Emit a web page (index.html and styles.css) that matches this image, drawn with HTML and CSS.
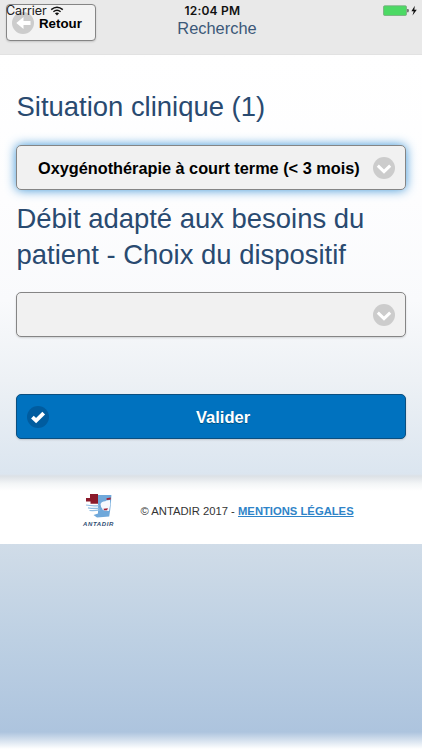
FILE: index.html
```
<!DOCTYPE html>
<html lang="fr">
<head>
<meta charset="utf-8">
<title>Recherche</title>
<link rel="stylesheet" href="styles.css">
</head>
<body>
<div class="status">
  <span class="carrier">Carrier</span>
  <svg class="wifi" width="14" height="10" viewBox="0 0 14 10"><path d="M1.2 3.6Q7-1.2 12.8 3.6M3.4 5.8Q7 2.7 10.6 5.8" fill="none" stroke="#111" stroke-width="1.5"/><path d="M4.9 7.3Q7 5.6 9.1 7.3L7 9.5Z" fill="#111"/></svg>
  <span class="clock">12:04 PM</span>
  <svg class="battery" width="36" height="12" viewBox="0 0 36 12"><rect x="1.5" y=".8" width="23" height="9.7" rx="1.2" fill="#4cd964" stroke="#78a97e" stroke-width=".8"/><path d="M25.4 4h.9q.7 1.6 0 3.2h-.9z" fill="#333"/><path d="M32.8.8L29.4 6.2h2.3l-1.2 4.3L34.8 4.8h-2.5z" fill="#111"/></svg>
</div>
<header class="header">
  <a class="back"><svg width="22" height="22" viewBox="0 0 22 22"><circle cx="11" cy="11" r="11" fill="#ccc"/><path d="M18.500 9h-7V5L4.300 11l7.200 6v-4h7z" fill="#fff"/></svg><span>Retour</span></a>
  <h1>Recherche</h1>
</header>
<main class="content">
  <h2 class="first">Situation clinique (1)</h2>
  <div class="select focus"><span>Oxygénothérapie à court terme (&lt; 3 mois)</span><svg width="22" height="22" viewBox="0 0 22 22"><circle cx="11" cy="11" r="11" fill="#ccc"/><path d="M4.8 8.7L11 14.7l6.200-6" fill="none" stroke="#fff" stroke-width="3"/></svg></div>
  <h2 class="second">Débit adapté aux besoins du<br>patient - Choix du dispositif</h2>
  <div class="select"><span></span><svg width="22" height="22" viewBox="0 0 22 22"><circle cx="11" cy="11" r="11" fill="#ccc"/><path d="M4.8 8.7L11 14.7l6.200-6" fill="none" stroke="#fff" stroke-width="3"/></svg></div>
  <div class="submit"><svg width="22" height="22" viewBox="0 0 22 22"><circle cx="11" cy="11" r="11" fill="#005c9f"/><path d="M5.4 11.1l3.7 3.6 7.6-7.6" fill="none" stroke="#fff" stroke-width="3.8"/></svg><span>Valider</span></div>
</main>
<footer class="footer">
  <div class="logo">
    <svg width="30" height="24" viewBox="0 0 30 24"><path d="M10 1H26.4L26 8l-.8 8-1 6.6L12 23.5 8.5 21l4.5-1.5V9z" fill="#6fa8da"/><path d="M15.500 10q1-2.500 3-2.500t3-1l3.500-.5.3 4-1.3 7-5-.5q-3.5-2-3.500-6.500z" fill="#f5f9fd"/><path d="M5 0h8v9.800H5.500V7.500H1V4h4z" fill="#8b1a2b"/><path d="M21.500 4.300l4.200-.8v2l-4 .5zM18.500 14.700l4.500-.5-1 2h-3z" fill="#a12234"/><path d="M1 11q5.500 1.200 13 .6M3 13.800q5 1 11.500.4M4.500 16.500q5 .4 10.500-.6" fill="none" stroke="#8fbde4" stroke-width="1.200"/></svg>
    <span>ANTADIR</span>
  </div>
  <p>© ANTADIR 2017 - <a>MENTIONS LÉGALES</a></p>
</footer>
</body>
</html>
```
FILE: styles.css
```
* { box-sizing: border-box; }
html { height: 100%; }
body {
  margin: 0;
  height: 750px;
  overflow: hidden;
  font-family: "Liberation Sans", Arial, sans-serif;
  background: linear-gradient(#fff 55px, #fdfdfe 200px, #f9fafc 300px, #edf1f5 380px, #dce6f0 470px, #d0dce8 545px, #bdd0e3 640px, #adc4de 732px, #fff 749px);
}
svg { display: block; flex: none; }
.status {
  position: absolute;
  z-index: 2;
  top: 0;
  left: 0;
  width: 422px;
  height: 22px;
  padding: 0 4px 0 6px;
  display: flex;
  align-items: center;
  color: #222;
}
.carrier { font: 12.6px/22px Inter, sans-serif; width: 41px; letter-spacing: -0.1px; white-space: nowrap; }
.wifi { margin-left: 3px; }
.clock { margin-left: 120.5px; width: 70px; font: 600 12px/22px Inter, sans-serif; letter-spacing: .2px; color: #111; white-space: nowrap; }
.battery { margin-left: auto; }
.header {
  position: relative;
  height: 55px;
  background: #e9e9e9;
  border-bottom: 1px solid #e2e2e2;
}
.header h1 {
  margin: 0;
  padding-top: 17px;
  padding-left: 12px;
  text-align: center;
  font-size: 16.4px;
  line-height: 22px;
  font-weight: 400;
  color: #3b5878;
}
.back {
  position: absolute;
  top: 4px;
  left: 6px;
  width: 90px;
  height: 37px;
  border: 1px solid #858585;
  border-radius: 4px;
  background: #f3f3f3;
  display: flex;
  align-items: center;
  padding-left: 5px;
  gap: 5px;
  font-size: 13.3px;
  font-weight: 700;
  box-shadow: 0 1px 2px rgba(0,0,0,.15);
}
.back span { padding-top: 2px; }
.content { padding: 0 16px; height: 419px; }
h2 { margin: 0; padding-left: .5px; color: #294a70; font-size: 27.45px; line-height: 36px; font-weight: 400; white-space: nowrap; }
.first { padding-top: 34px; margin-bottom: 20px; }
.second { margin: 11px 0 19px; }
.select, .submit {
  height: 45px;
  width: 390px;
  border: 1px solid #858585;
  border-radius: 5px;
  background: #f1f1f1;
  display: flex;
  align-items: center;
  padding: 0 10px 0 21px;
  font-size: 16.3px;
  font-weight: 700;
  white-space: nowrap;
  box-shadow: 0 1px 2px rgba(0,0,0,.15);
}
.select span { padding-top: 1px; }
.select svg { margin-left: auto; }
.focus { box-shadow: 0 0 11px #3a93d6; }
.submit {
  margin-top: 57px;
  background: #0072bf;
  border-color: #0b4f80;
  color: #fff;
  padding: 0 0 0 10px;
  font-size: 16.5px;
  text-shadow: 0 1px 0 #005080;
}
.submit span { flex: 1; text-align: center; padding: 1px 8px 0 0; }
.footer {
  height: 70px;
  padding: 5px 0 0 83px;
  display: flex;
  align-items: center;
  background: linear-gradient(#dce6f0 0, #dce1e6 2px, #f4f6f7 10px, #fff 17px);
}
.logo { width: 57.5px; margin-top: -1px; color: #2e4c72; }
.logo svg { margin-left: 2px; margin-bottom: 2px; }
.logo span { display: block; font: italic 700 6px/8px "Liberation Sans", sans-serif; letter-spacing: .65px; }
.footer p { margin: -1px 0 0; font-size: 11.25px; color: #333; white-space: nowrap; }
.footer a { color: #2f84c8; font-weight: 700; text-decoration: underline; }
```
